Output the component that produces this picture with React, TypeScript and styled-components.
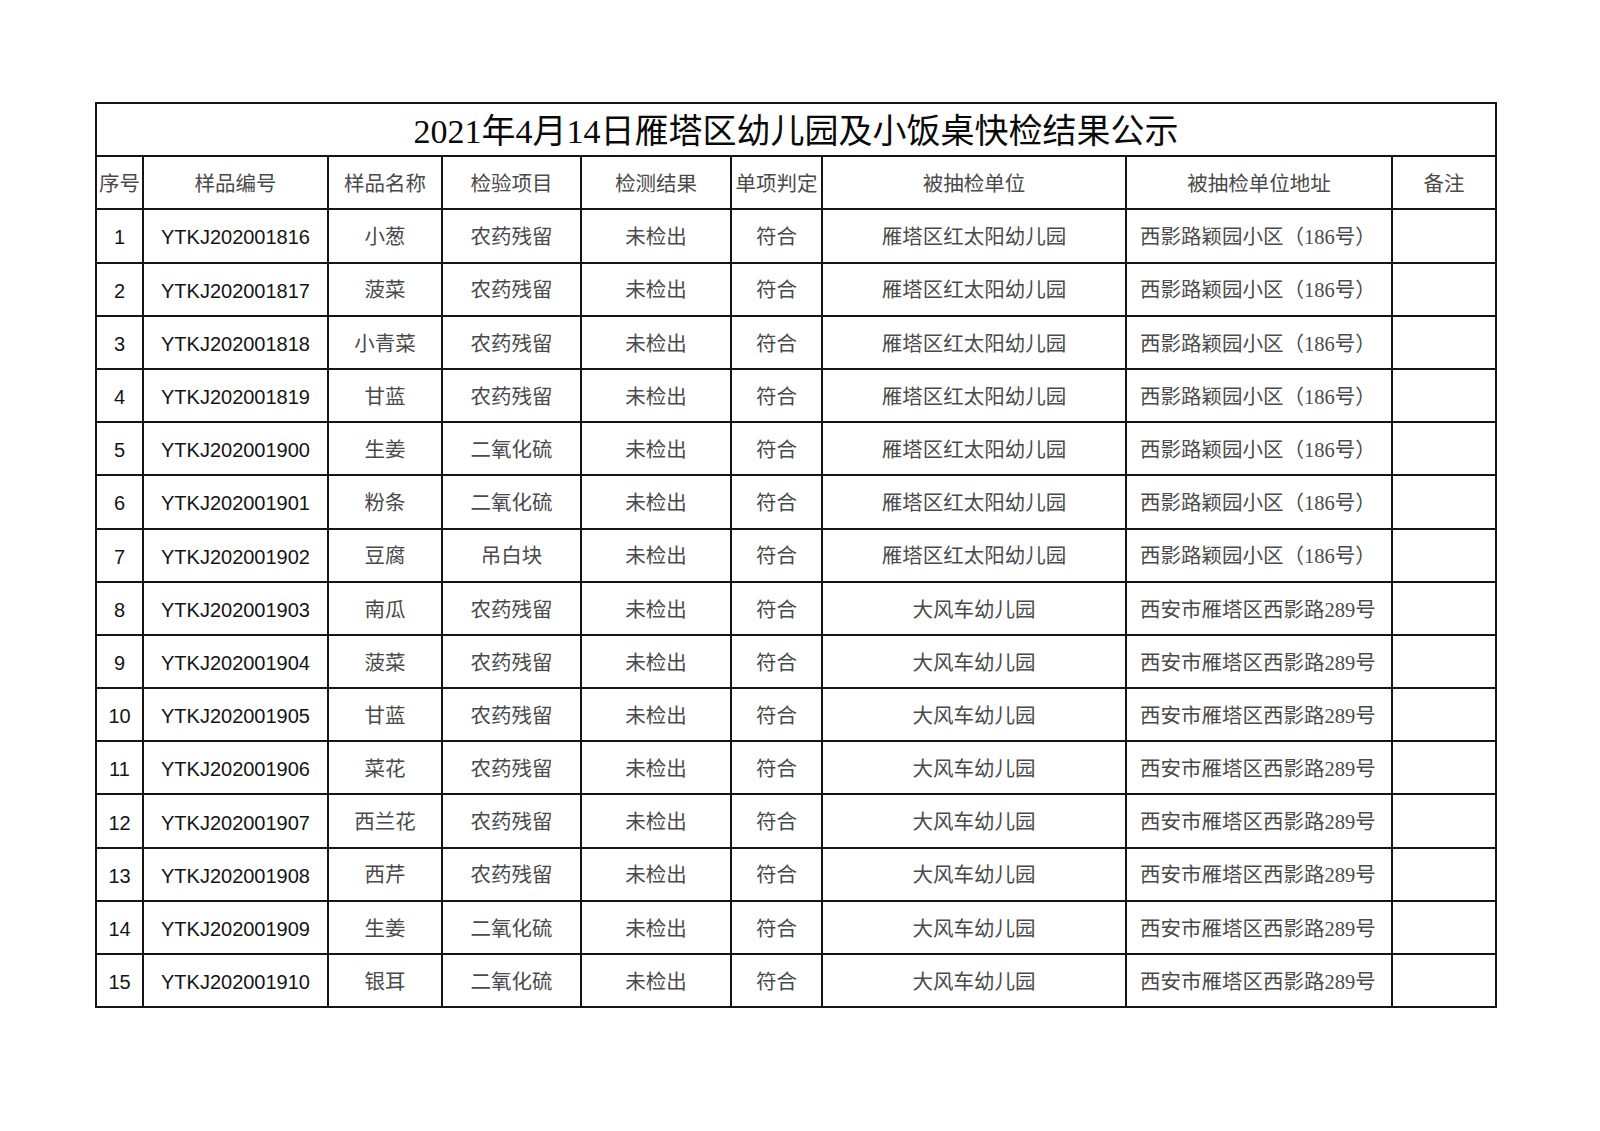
import React from "react";
import styled, { createGlobalStyle } from "styled-components";

const GlobalStyle = createGlobalStyle`
  html, body { margin: 0; padding: 0; background: #ffffff; }
  body { font-family: "Noto Sans CJK SC", sans-serif; }
`;

const Page = styled.div`
  width: 1600px;
  height: 1131px;
  box-sizing: border-box;
  padding: 102px 0 0 95px;
  background: #fff;
`;

const Table = styled.table`
  border-collapse: collapse;
  table-layout: fixed;
  width: 1400px;
`;

const TitleCell = styled.th`
  height: 46.2px;
  border: 2px solid #151515;
  padding: 5px 0 0 0;
  text-align: center;
  font-family: "Liberation Serif", "Noto Sans CJK SC", serif;
  font-weight: normal;
  font-size: 34px;
  letter-spacing: 0;
  color: #0a0a0a;
  line-height: 1;
`;

const Cell = styled.td<{ $kind?: "cjk" | "code" | "num" | "addr" }>`
  height: 48.2px;
  border: 2px solid #151515;
  padding: ${(p) => (p.$kind === "addr" ? "3px 0 0 13px" : "3px 0 0 0")};
  text-align: ${(p) => (p.$kind === "addr" ? "left" : "center")};
  white-space: nowrap;
  overflow: hidden;
  font-family: ${(p) =>
    p.$kind === "code" || p.$kind === "num"
      ? '"Liberation Sans", "Noto Sans CJK SC", sans-serif'
      : '"Liberation Serif", "Noto Sans CJK SC", serif'};
  font-size: ${(p) => (p.$kind === "code" || p.$kind === "num" ? "20px" : "20.5px")};
  color: ${(p) => (p.$kind === "code" || p.$kind === "num" ? "#141414" : "#4a4a4a")};
  line-height: 1;
`;

const HeadCell = styled(Cell).attrs({ as: "th" })`
  font-weight: normal;
`;

const widths = [47, 185, 114, 139, 150, 91, 304, 266, 104];
const headers = ["序号", "样品编号", "样品名称", "检验项目", "检测结果", "单项判定", "被抽检单位", "被抽检单位地址", "备注"];

type Row = [string, string, string, string];

const rows: Row[] = [
  ["YTKJ202001816", "小葱", "农药残留", "a"],
  ["YTKJ202001817", "菠菜", "农药残留", "a"],
  ["YTKJ202001818", "小青菜", "农药残留", "a"],
  ["YTKJ202001819", "甘蓝", "农药残留", "a"],
  ["YTKJ202001900", "生姜", "二氧化硫", "a"],
  ["YTKJ202001901", "粉条", "二氧化硫", "a"],
  ["YTKJ202001902", "豆腐", "吊白块", "a"],
  ["YTKJ202001903", "南瓜", "农药残留", "b"],
  ["YTKJ202001904", "菠菜", "农药残留", "b"],
  ["YTKJ202001905", "甘蓝", "农药残留", "b"],
  ["YTKJ202001906", "菜花", "农药残留", "b"],
  ["YTKJ202001907", "西兰花", "农药残留", "b"],
  ["YTKJ202001908", "西芹", "农药残留", "b"],
  ["YTKJ202001909", "生姜", "二氧化硫", "b"],
  ["YTKJ202001910", "银耳", "二氧化硫", "b"],
];

const units: Record<string, [string, string]> = {
  a: ["雁塔区红太阳幼儿园", "西影路颖园小区（186号）"],
  b: ["大风车幼儿园", "西安市雁塔区西影路289号"],
};

export default function App() {
  return (
    <>
      <GlobalStyle />
      <Page>
        <Table>
          <colgroup>
            {widths.map((w, i) => (
              <col key={i} style={{ width: w }} />
            ))}
          </colgroup>
          <thead>
            <tr>
              <TitleCell colSpan={9}>2021年4月14日雁塔区幼儿园及小饭桌快检结果公示</TitleCell>
            </tr>
            <tr>
              {headers.map((h) => (
                <HeadCell key={h} $kind="cjk">
                  {h}
                </HeadCell>
              ))}
            </tr>
          </thead>
          <tbody>
            {rows.map((r, i) => (
              <tr key={r[0]}>
                <Cell $kind="num">{i + 1}</Cell>
                <Cell $kind="code">{r[0]}</Cell>
                <Cell $kind="cjk">{r[1]}</Cell>
                <Cell $kind="cjk">{r[2]}</Cell>
                <Cell $kind="cjk">未检出</Cell>
                <Cell $kind="cjk">符合</Cell>
                <Cell $kind="cjk">{units[r[3]][0]}</Cell>
                <Cell $kind="addr">{units[r[3]][1]}</Cell>
                <Cell $kind="cjk"></Cell>
              </tr>
            ))}
          </tbody>
        </Table>
      </Page>
    </>
  );
}
